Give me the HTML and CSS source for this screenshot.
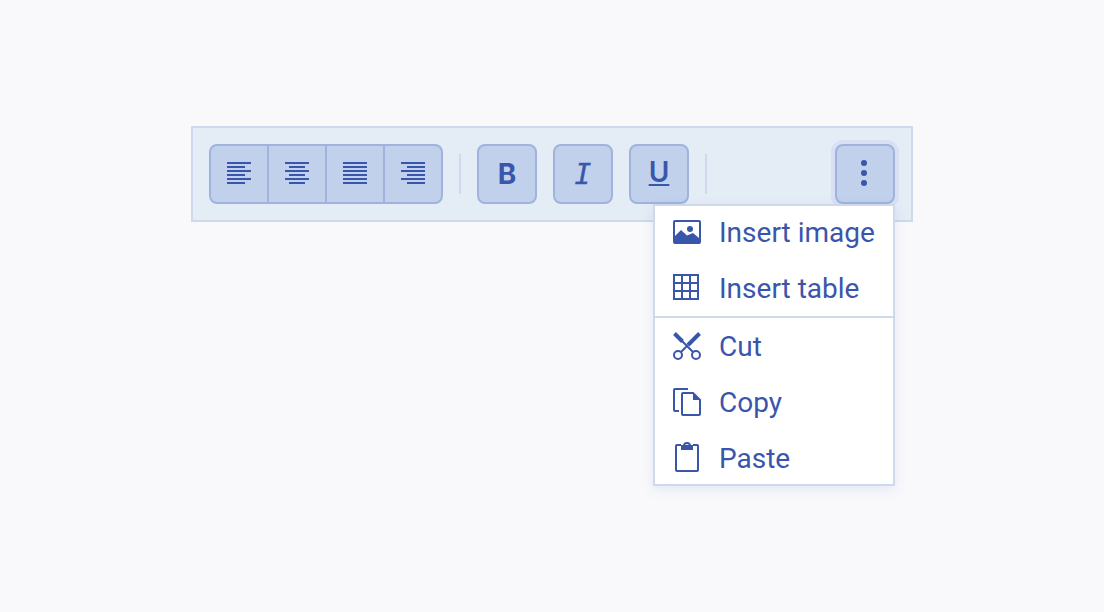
FILE: index.html
```html
<!DOCTYPE html>
<html lang="en">
<head>
<meta charset="utf-8">
<title>Editor toolbar</title>
<link rel="stylesheet" href="styles.css">
</head>
<body>
<div class="toolbar" role="toolbar">
  <div class="group">
    <button class="btn"><svg class="align" viewBox="0 0 24 22"><path d="M0 1h24M0 5h18M0 9h24M0 13h18M0 17h24M0 21h18"/></svg></button>
    <button class="btn"><svg class="align" viewBox="0 0 24 22"><path d="M0 1h24M4 5h16M0 9h24M4 13h16M0 17h24M4 21h16"/></svg></button>
    <button class="btn"><svg class="align" viewBox="0 0 24 22"><path d="M0 1h24M0 5h24M0 9h24M0 13h24M0 17h24M0 21h24"/></svg></button>
    <button class="btn"><svg class="align" viewBox="0 0 24 22"><path d="M0 1h24M6 5h18M0 9h24M6 13h18M0 17h24M6 21h18"/></svg></button>
  </div>
  <span class="sep"></span>
  <button class="btn solo bold">B</button>
  <button class="btn solo italic">I</button>
  <button class="btn solo under"><span class="u">U</span></button>
  <span class="sep"></span>
  <div class="more-wrap">
    <button class="btn more"><svg class="dots" viewBox="0 0 6 26"><circle cx="3" cy="3" r="3"/><circle cx="3" cy="13" r="3"/><circle cx="3" cy="23" r="3"/></svg></button>
    <div class="menu" role="menu">
      <div class="section">
        <div class="item"><span class="ico"><svg width="28" height="24" viewBox="0 0 28 24"><path class="fill" fill-rule="evenodd" d="M2 0h24a2 2 0 0 1 2 2v20a2 2 0 0 1-2 2H2a2 2 0 0 1-2-2V2a2 2 0 0 1 2-2zM2 2v14l6-6 6 5.500 6-2.500 6 5V2z"/><circle class="fill" cx="17" cy="9" r="3"/></svg></span>Insert image</div>
        <div class="item"><span class="ico up"><svg width="26" height="26" viewBox="0 0 26 26"><path class="line" d="M1 1h24v24H1zM9 1v24M17 1v24M1 9h24M1 17h24"/></svg></span>Insert table</div>
      </div>
      <div class="section">
        <div class="item"><span class="ico"><svg width="28" height="28" viewBox="0 0 28 28"><path class="thick" d="M1.500 1.500l8 8M26.500 1.500L15 13"/><path class="line" d="M9 9l11 11M15 13l-7 7"/><circle class="line" cx="5" cy="23" r="4"/><circle class="line" cx="23" cy="23" r="4"/></svg></span>Cut</div>
        <div class="item"><span class="ico"><svg width="28" height="28" viewBox="0 0 28 28"><path class="line" d="M6 23H2a1 1 0 0 1-1-1V2a1 1 0 0 1 1-1h13"/><path class="line" d="M10 5h10l7 7v14a1 1 0 0 1-1 1H10a1 1 0 0 1-1-1V6a1 1 0 0 1 1-1z"/><path class="fill" d="M20 5l7 7h-7z"/></svg></span>Copy</div>
        <div class="item"><span class="ico paste up"><svg width="24" height="30" viewBox="0 0 24 30"><path class="line" d="M6 3H2a1 1 0 0 0-1 1v24a1 1 0 0 0 1 1h20a1 1 0 0 0 1-1V4a1 1 0 0 0-1-1h-4"/><path class="line" d="M9 4a3 3 0 0 1 6 0"/><path class="fill" d="M6 3h12v5H6z"/></svg></span>Paste</div>
      </div>
    </div>
  </div>
</div>
</body>
</html>
```
FILE: styles.css
```css
* { box-sizing: border-box; }
html, body { margin: 0; height: 100%; }
body {
  background: #f9f9fc;
  padding: 126px 191px 0;
  font-family: Roboto, "Liberation Sans", sans-serif;
  color: #3a56ab;
}
.toolbar {
  width: 722px;
  height: 96px;
  display: flex;
  align-items: center;
  gap: 16px;
  padding: 0 16px;
  background: #e4ecf6;
  border: 2px solid #cfd9ec;
}
.group { display: flex; }
.btn {
  width: 60px;
  height: 60px;
  padding: 0;
  display: flex;
  align-items: center;
  justify-content: center;
  background: #c1d1eb;
  border: 2px solid #9fb3de;
  border-radius: 0;
  color: #3a56ab;
  font-family: Inter, sans-serif;
}
.group .btn + .btn { margin-left: -2px; }
.group .btn:first-child { border-radius: 8px 0 0 8px; }
.group .btn:last-child { border-radius: 0 8px 8px 0; }
.solo { border-radius: 8px; }
.align { width: 24px; height: 22px; margin-top: -2px; }
.align path { stroke: #3a56ab; stroke-width: 2; fill: none; }
.sep { width: 2px; height: 40px; background: #cfd9ec; }
.bold { font-size: 28px; font-weight: 700; }
.italic {
  font-family: "DejaVu Sans Mono", monospace;
  font-style: italic;
  font-size: 28px;
  font-weight: 400;
  -webkit-text-stroke: 0.4px #3a56ab;
}
.under { font-size: 28px; font-weight: 600; padding-bottom: 4px; }
.u { text-decoration: underline; text-decoration-thickness: 2px; text-underline-offset: 2px; }
.more-wrap { position: relative; margin-left: auto; }
.more { border-radius: 8px; box-shadow: 0 0 0 4px #d7e1f3; }
.dots { width: 6px; height: 26px; fill: #3a56ab; margin: -2px 2px 0 0; }
.menu {
  position: absolute;
  top: 60px;
  right: 0;
  width: 242px;
  background: #fff;
  box-shadow: inset 0 0 0 2px #cfd9ec, 0 4px 12px rgba(58, 86, 171, 0.10);
  font-size: 28px;
}
.section + .section { border-top: 2px solid #cfd9ec; }
.item {
  height: 56px;
  display: flex;
  align-items: center;
  padding-left: 20px;
  white-space: nowrap;
}
.ico { width: 46px; flex: none; display: flex; align-items: center; }
.up { padding-bottom: 2px; }
.paste { padding-left: 2px; }
.fill { fill: #3a56ab; }
.line { fill: none; stroke: #3a56ab; stroke-width: 2; }
.thick { fill: none; stroke: #3a56ab; stroke-width: 4; }
```
